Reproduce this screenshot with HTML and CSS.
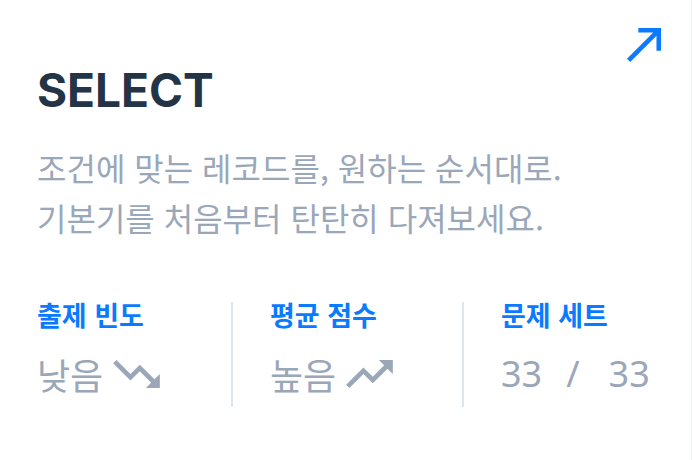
FILE: index.html
```html
<!DOCTYPE html>
<html lang="ko">
<head>
<meta charset="utf-8">
<link rel="stylesheet" href="styles.css">
</head>
<body>
<div class="card">
  <a class="open-link" href="#" aria-label="열기">
    <svg viewBox="4 5 15 15" width="34" height="34"><path d="M9 5v2h6.59L4 18.59 5.41 20 17 8.41V15h2V5z" fill="currentColor"/></svg>
  </a>
  <h1 class="title">SELECT</h1>
  <p class="desc">조건에 맞는 레코드를, 원하는 순서대로.<br>기본기를 처음부터 탄탄히 다져보세요.</p>
  <div class="stats">
    <div class="stat">
      <div class="stat-label">출제 빈도</div>
      <div class="stat-value">낮음<svg class="trend" viewBox="2 6 20 12" width="47" height="28"><path d="M16 18l2.29-2.29-4.88-4.88-4 4L2 7.41 3.41 6l6 6 4-4 6.3 6.29L22 12v6z" fill="currentColor"/></svg></div>
    </div>
    <div class="stat">
      <div class="stat-label">평균 점수</div>
      <div class="stat-value">높음<svg class="trend" viewBox="2 6 20 12" width="47" height="28"><path d="M16 6l2.29 2.29-4.88 4.88-4-4L2 16.59 3.41 18l6-6 4 4 6.3-6.29L22 12V6z" fill="currentColor"/></svg></div>
    </div>
    <div class="stat">
      <div class="stat-label">문제 세트</div>
      <div class="stat-value count"><span>33</span><span class="sep">/</span><span>33</span></div>
    </div>
  </div>
</div>
</body>
</html>
```
FILE: styles.css
```css
* { box-sizing: border-box; }
html, body { margin: 0; padding: 0; background: #ffffff; }
body { font-family: "Noto Sans CJK KR", "Noto Sans", sans-serif; }
.card {
  position: relative;
  width: 692px;
  height: 460px;
  background: #ffffff;
  border-right: 1px solid #eef0f3;
  padding: 65px 37px 0 37px;
}
.open-link {
  position: absolute;
  top: 28px;
  right: 30px;
  color: #0a7bff;
  display: block;
  line-height: 0;
}
.title {
  margin: 0;
  font-family: Inter, "Noto Sans", sans-serif;
  font-weight: 700;
  font-size: 46px;
  line-height: 50px;
  color: #243447;
  letter-spacing: 0;
}
.desc {
  margin: 27px 0 0;
  font-size: 32px;
  line-height: 50px;
  color: #9aa7b8;
}
.stats {
  display: grid;
  grid-template-columns: 194px 231px 1fr;
  margin-top: 60px;
}
.stat + .stat {
  border-left: 2px solid #dde5ee;
  padding-left: 37px;
}
.stat {
  height: 105px;
}
.stat-label {
  margin-top: -4px;
  font-size: 27px;
  font-weight: 700;
  line-height: 34px;
  color: #0a7bff;
}
.stat-value {
  margin-top: 20px;
  display: flex;
  align-items: center;
  font-size: 36px;
  line-height: 44px;
  color: #9aa7b8;
}
.trend { margin-left: 10px; color: #9aa7b8; }
.count { font-family: "Noto Sans", sans-serif; font-size: 36px; }
.sep { margin: 0 29px 0 24px; }
```
